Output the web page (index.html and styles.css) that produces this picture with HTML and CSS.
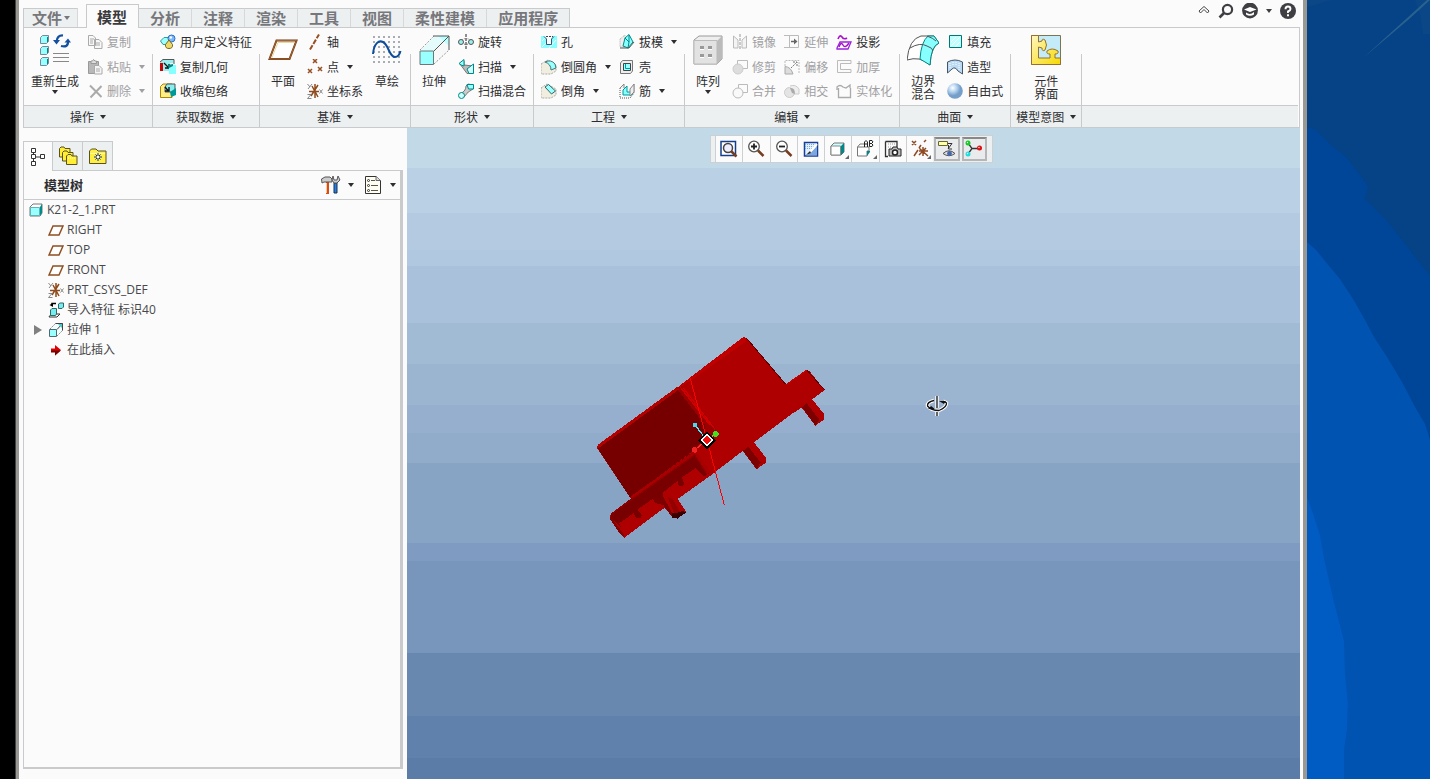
FILE: index.html
```html
<!DOCTYPE html>
<html lang="zh-CN">
<head>
<meta charset="utf-8">
<title>K21-2_1</title>
<link rel="stylesheet" href="styles.css">
</head>
<body>
<svg class="defs" aria-hidden="true">
  <symbol id="plane" viewBox="0 0 16 16"><path d="M1 13L5 4H15L11 13Z" fill="#fff" stroke="#8f4f22" stroke-width="1.500"/></symbol>
  <symbol id="csys" viewBox="0 0 16 16"><path d="M8 1V15M5 3L11 14M11 2L4 13M2 8.500H12" stroke="#8f4a1c" stroke-width="1.500" fill="none"/><path d="M.5 1L3 4M5 1L1 6M12.500 6.500L15.500 10.500M15.500 6.500L12.500 10.500M.5 11.500H4L.5 15.500H4.500" stroke="#888" fill="none"/></symbol>
  <symbol id="box" viewBox="0 0 16 16"><path d="M2 5L5 2H14V11L12 14H2Z" fill="#fff" stroke="#777"/><path d="M12 5L14 2V11L12 14Z" fill="#008c8c"/><path d="M2.500 5.500H11.500V13.500H2.500Z" fill="#9ff" stroke="#5fb5b5"/></symbol>
  <symbol id="extrude" viewBox="0 0 32 32"><path d="M17 2H31L16 17H2Z" fill="#e4fbfb"/><path d="M31 2V16L16 31V17Z" fill="#f8f8f8"/><path d="M20 2H31V12Z" fill="#bff"/><path d="M2 16L16 2M16 30L31 16" stroke="#999" stroke-dasharray="2 1.500" fill="none"/><path d="M15 2H31V16M16 17L31 2" stroke="#555" fill="none"/><path d="M2 17H15.500V30.500H2Z" fill="#9ff" stroke="#6d7777"/></symbol>
  <symbol id="extrude-small" viewBox="0 0 16 16"><path d="M8 1.500H14.500V8L9 14V7H2Z" fill="#f2ffff"/><path d="M2 7L7.500 1.500M9 14L14.500 8.500" stroke="#888" stroke-dasharray="2 1" fill="none"/><path d="M7.500 1.500H14.500V8.500M9 7.500L14.500 1.500" stroke="#444" fill="none"/><path d="M10 2H14V6Z" fill="#4cc"/><path d="M1.500 7.500H8.500V14.500H1.500Z" fill="#9ff" stroke="#567"/></symbol>
</svg>
<div class="screen">
<div class="black-edge"></div>
<main class="window">
<header class="topbar">
  <nav class="tabs">
    <button class="tab file">文件<i class="caret"></i></button>
    <button class="tab active">模型</button><button class="tab">分析</button><button class="tab">注释</button><button class="tab">渲染</button><button class="tab">工具</button><button class="tab">视图</button><button class="tab">柔性建模</button><button class="tab">应用程序</button>
  </nav>
  <div class="utils">
    <button aria-label="最小化功能区"><svg width="12" height="12" viewBox="0 0 12 12"><path d="M1 6L6 1.500L11 6L9.500 8L6 4.500L2.500 8Z" fill="#fff" stroke="#444"/></svg></button>
    <button aria-label="搜索"><svg width="16" height="16" viewBox="0 0 16 16"><circle cx="9.500" cy="6.500" r="4.600" fill="none" stroke="#3f3f43" stroke-width="2.200"/><path d="M6 10L1.500 14.500" stroke="#3f3f43" stroke-width="2.600"/></svg></button>
    <button aria-label="学习"><svg width="16" height="16" viewBox="0 0 16 16"><circle cx="8" cy="7.500" r="7.900" fill="#3f3f43"/><path d="M2 6.500L8 4L14.500 6.500L8 9ZM4 9.500Q8 12.500 12 9V11.500Q8 14 4 11.500Z" fill="#fff"/></svg></button>
    <button aria-label="更多"><i class="caret"></i></button>
    <button aria-label="帮助"><svg width="16" height="16" viewBox="0 0 16 16"><circle cx="8" cy="8" r="8" fill="#3f3f43"/><path d="M5.500 6.200Q5.500 3.500 8 3.500Q10.500 3.500 10.500 6Q10.500 7.500 8 8.500V10" fill="none" stroke="#fff" stroke-width="1.900"/><path d="M7 11.200H9V13.200H7Z" fill="#fff"/></svg></button>
  </div>
</header>

<section class="ribbon">
  <div class="group"><div class="body">
    <button class="big"><svg width="32" height="32" viewBox="0 0 32 32"><g stroke="#789" fill="#9ff"><path d="M1.500 3.500L3.500 1.500H9.500V7.500L7.500 9.500H1.500ZM1.500 14.500L3.500 12.500H9.500V18.500L7.500 20.500H1.500ZM1.500 25.500L3.500 23.500H9.500V29.500L7.500 31.500H1.500Z"/><path d="M8.500 3V8M8.500 14V19M8.500 25V30" stroke="#088"/></g><path d="M24 1.500Q18 1 17.500 8M22 12Q29.500 14 29 7" fill="none" stroke="#1550a0" stroke-width="2.200"/><path d="M14 6H21L17.500 10.500ZM25.500 8.500H32L29 4.500Z" fill="#1550a0"/><path d="M14 19.500H30M14 23.500H30M14 27.500H30" stroke="#888"/></svg><span>重新生成</span><i class="caret"></i></button>
    <div class="col">
      <button class="cmd" disabled><svg viewBox="0 0 16 16"><path d="M1.500 1.500H6L8.500 4V11.500H1.500ZM7.500 5.500H12L15 8.500V14.500H7.500Z" fill="#f8f8f8" stroke="#aaa"/><path d="M3 5H7M3 7H6M3 9H6M9 9H13M9 11H13" stroke="#aaa"/></svg>复制</button>
      <button class="cmd" disabled><svg viewBox="0 0 16 16"><path d="M1.500 2.500H11.500V14.500H1.500Z" fill="#b8b8b8" stroke="#999"/><path d="M4 2H5.500L6.500 .5L8 2H9.500V4.500H4Z" fill="#ddd" stroke="#999"/><path d="M7.500 6.500H12L15 9.500V15H7.500Z" fill="#f5f5f5" stroke="#aaa"/><path d="M9 10H13M9 12H13" stroke="#aaa"/></svg>粘贴<i class="caret"></i></button>
      <button class="cmd" disabled><svg viewBox="0 0 16 16"><path d="M3 2.500L14.500 14M14.500 3L3.500 14.500" stroke="#aaa" stroke-width="2"/></svg>删除<i class="caret"></i></button>
    </div></div><button class="foot">操作<i class="caret"></i></button></div>

  <div class="group"><div class="body"><div class="col">
      <button class="cmd"><svg viewBox="0 0 16 16"><path d="M.5 7L4 3.500H10V10.500H3Z" fill="#9ff" stroke="#399"/><circle cx="11.500" cy="4.500" r="3.500" fill="#7bb8fb" stroke="#2a6fc0"/><circle cx="10.800" cy="3.500" r="1.200" fill="#fff"/><path d="M9 6L12.500 10.500Q13 14.500 9 14.500Q5 14.500 5.500 10.500Z" fill="#ecd968" stroke="#7a6420"/></svg>用户定义特征</button>
      <button class="cmd"><svg viewBox="0 0 16 16"><path d="M0 3L3 0H14V4H10V12H0Z" fill="#9ee"/><path d="M0 3L3 .5H14V5" fill="none" stroke="#555"/><path d="M0 4H3V12H0Z" fill="#c00"/><path d="M4 4L8 8M9 5V9H5" stroke="#111" fill="none" stroke-width="1.300"/><path d="M9 8L11 6H16V15H9Z" fill="#8ff"/><path d="M8 6L13 5V7L9 9V11Z" fill="#088"/></svg>复制几何</button>
      <button class="cmd"><svg viewBox="0 0 16 16"><path d="M.5 3.500L3 1H12V14.500H.5Z" fill="#fe8" stroke="#a80"/><path d="M5 4L7 1H15V9H5Z" fill="#8ee" stroke="#555"/><path d="M5 4L8 7.500M9 4V8H5" stroke="#111" fill="none" stroke-width="1.400"/><path d="M10 9L16 5V12L11 14Z" fill="#099"/></svg>收缩包络</button>
    </div></div><button class="foot">获取数据<i class="caret"></i></button></div>

  <div class="group"><div class="body">
    <button class="big"><svg width="32" height="32" viewBox="0 0 32 32"><path d="M2.500 25L9.500 6.500H29.500L22.500 25Z" fill="#fff" stroke="#6f3b1b" stroke-width="2"/><path d="M5 23.500L11 8.500H27" fill="none" stroke="#e8d9a0"/><path d="M2.500 25L9.500 6.500H29.500L22.500 25Z" fill="none" stroke="#a7652c"/></svg><span>平面</span></button>
    <div class="col">
      <button class="cmd"><svg viewBox="0 0 16 16"><path d="M3 15.500L12 .5" stroke="#9a4f22" stroke-width="2" stroke-dasharray="5 1.500"/></svg>轴</button>
      <button class="cmd"><svg viewBox="0 0 16 16"><path d="M6 0L10 4M10 0L6 4M1 10L5 14M5 10L1 14M11 8L15 12M15 8L11 12" stroke="#9a4f22" stroke-width="1.500"/></svg>点<i class="caret"></i></button>
      <button class="cmd"><svg><use href="#csys"/></svg>坐标系</button>
    </div>
    <button class="big"><svg width="32" height="32" viewBox="0 0 32 32"><g stroke="#a9adb2" stroke-width="2" stroke-dasharray="2 3"><path d="M2 3H31M2 8H31M2 13H31M2 18H31M2 23H31M2 28H31"/></g><path d="M2 20C3 9 8 6 12 8C18 11 18 23 24 23Q28 23 29.500 17" fill="none" stroke="#0d4d9c" stroke-width="2"/></svg><span>草绘</span></button>
    </div><button class="foot">基准<i class="caret"></i></button></div>

  <div class="group"><div class="body">
    <button class="big"><svg width="32" height="32"><use href="#extrude"/></svg><span>拉伸</span></button>
    <div class="col">
      <button class="cmd"><svg viewBox="0 0 16 16"><path d="M8 0V16" stroke="#222" stroke-dasharray="3 1"/><circle cx="3" cy="8" r="2.500" fill="#9ee" stroke="#555"/><circle cx="13" cy="8" r="2.500" fill="#9ee" stroke="#555"/><path d="M4 6Q8 3 12 6" fill="none" stroke="#777" stroke-dasharray="1 1"/><path d="M6 10Q8 11.500 10 10" fill="none" stroke="#777"/></svg>旋转</button>
      <button class="cmd"><svg viewBox="0 0 16 16"><path d="M2 5L6 2V6L15 7V14.500H9Z" fill="#bbb" stroke="#777"/><path d="M1 4.500L6 .5V7L3 6Z" fill="#9ff" stroke="#088"/><path d="M9 10L15.500 5V14.500H11Z" fill="#cff" stroke="#088"/></svg>扫描<i class="caret"></i></button>
      <button class="cmd"><svg viewBox="0 0 16 16"><path d="M1 11Q8 9 8 3L10 1L15 2V6Q10 8 6 14Z" fill="#ccc" stroke="#777"/><path d="M9 1.500H15.500V6H10.500Z" fill="#9ff" stroke="#088"/><circle cx="3.500" cy="12.500" r="3" fill="#cff" stroke="#088"/></svg>扫描混合</button>
    </div></div><button class="foot">形状<i class="caret"></i></button></div>

  <div class="group"><div class="body">
    <div class="col">
      <button class="cmd"><svg viewBox="0 0 16 16"><path d="M0 2H4L6 5V11H10V5L12 2H16V14H0Z" fill="#8ff"/><path d="M1 7L5 3M1 13L6 8M8 14L15 6" stroke="#fff"/><path d="M3 2.500L5.500 5V10.500H10.500V5L13 2.500" fill="none" stroke="#357"/><path d="M5 2.500H12" stroke="#444" stroke-dasharray="2 1"/></svg>孔</button>
      <button class="cmd"><svg viewBox="0 0 16 16"><path d="M0 5L7 1L15 6V12L10 15L0 15Z" fill="#f1eee0" stroke="#aaa" stroke-dasharray="2 1"/><path d="M4 3Q10 0 14 5L15 9L10 11Q10 5 4 3Z" fill="#9ff" stroke="#477"/></svg>倒圆角<i class="caret"></i></button>
      <button class="cmd"><svg viewBox="0 0 16 16"><path d="M0 5L6 1L15 6V12L10 15H0Z" fill="#f1eee0" stroke="#aaa" stroke-dasharray="2 1"/><path d="M4 4L7.500 1.500L14.500 8L10.500 11Z" fill="#9ff" stroke="#366"/></svg>倒角<i class="caret"></i></button>
    </div>
    <div class="col">
      <button class="cmd"><svg viewBox="0 0 16 16"><path d="M1 5L6 1V13H1Z" fill="#eee" stroke="#aaa" stroke-dasharray="1 1"/><path d="M6 4L10 .5L14 8L9 14L4 12Z" fill="#8ff" stroke="#088"/><path d="M6 4L10 8L9 14M10 8L10 1" stroke="#088" fill="none"/><path d="M1 14H10L15 8" fill="none" stroke="#555"/></svg>拔模<i class="caret"></i></button>
      <button class="cmd"><svg viewBox="0 0 16 16"><path d="M1.500 4L3.500 1.500H13.500V12L11.500 14.500H1.500Z" fill="#eee" stroke="#777"/><path d="M4.500 4.500H11.500V11.500H4.500Z" fill="#9ff" stroke="#444"/><path d="M6.500 5V9.500H11" stroke="#099" fill="none"/></svg>壳</button>
      <button class="cmd"><svg viewBox="0 0 16 16"><path d="M1 5V15H11L15 10V1" fill="none" stroke="#555" stroke-dasharray="1 1"/><path d="M5 6L8 3V9H13V12H4V7Z" fill="#8ff" stroke="#099"/><path d="M1 5L5 1V5M11 13L15 9V1L11 6Z" fill="#eee" stroke="#888"/></svg>筋<i class="caret"></i></button>
    </div></div><button class="foot">工程<i class="caret"></i></button></div>

  <div class="group"><div class="body">
    <button class="big"><svg width="32" height="32" viewBox="0 0 32 32"><path d="M2 6L7 2H30V25L25 30H2Z" fill="#eee" stroke="#999"/><path d="M25 7L30 2V25L25 30Z" fill="#bbb"/><path d="M2 6.500H25V30H2Z" fill="#e2e2e2" stroke="#bbb"/><path d="M8 12H12V16H8ZM16 12H20V16H16ZM8 20H12V24H8ZM16 20H20V24H16Z" fill="#999"/><path d="M8 15H12V16H8ZM16 15H20V16H16ZM8 23H12V24H8ZM16 23H20V24H16Z" fill="#fff"/></svg><span>阵列</span><i class="caret"></i></button>
    <div class="col">
      <button class="cmd" disabled><svg viewBox="0 0 16 16"><path d="M1.500 2L6 6V14H1.500ZM14.500 2L10 6V14H14.500Z" fill="#f4f4f4" stroke="#bbb"/><path d="M8 0V16" stroke="#999" stroke-dasharray="3 1"/></svg>镜像</button>
      <button class="cmd" disabled><svg viewBox="0 0 16 16"><path d="M5.500 1.500H15.500V9.500H5.500Z" fill="none" stroke="#bbb"/><circle cx="6" cy="10" r="5" fill="#ddd" stroke="#ccc"/></svg>修剪</button>
      <button class="cmd" disabled><svg viewBox="0 0 16 16"><path d="M6.500 6V1.500H15.500V9.500H11" fill="none" stroke="#bbb"/><circle cx="6" cy="10" r="5" fill="#f9f9f9" stroke="#bbb"/></svg>合并</button>
    </div>
    <div class="col">
      <button class="cmd" disabled><svg viewBox="0 0 16 16"><path d="M0 1.500H14.500V13.500H0M5.500 1V14" fill="none" stroke="#bbb"/><path d="M7 7.500H11" stroke="#666" stroke-width="1.500"/><path d="M10 4.500L13.500 7.500L10 10.500Z" fill="#666"/></svg>延伸</button>
      <button class="cmd" disabled><svg viewBox="0 0 16 16"><path d="M1 7V1.500H15V15" fill="none" stroke="#bbb" stroke-dasharray="2 1"/><path d="M1 7.500Q7 8 9 15H1Z" fill="#ddd" stroke="#aaa"/><path d="M7 9L13 3M9 3H13V7" fill="none" stroke="#777" stroke-dasharray="2 1"/></svg>偏移</button>
      <button class="cmd" disabled><svg viewBox="0 0 16 16"><circle cx="5.500" cy="9.500" r="5" fill="#e4e4e4" stroke="#ccc"/><path d="M6 3Q12 1 15 6V11H9" fill="#eee" stroke="#ccc"/><path d="M6 5Q11 4 11 11L8 10Z" fill="#aaa"/></svg>相交</button>
    </div>
    <div class="col">
      <button class="cmd"><svg viewBox="0 0 16 16"><path d="M2 5Q4 0 6 3T11 4" fill="none" stroke="#a1c" stroke-width="1.600"/><path d="M1 14L4 8H15L12 15H1Z" fill="#fff" stroke="#92d" stroke-width="1.300"/><path d="M3 13Q5 7 7 11T13 9" fill="none" stroke="#a1c" stroke-width="1.500"/></svg>投影</button>
      <button class="cmd" disabled><svg viewBox="0 0 16 16"><path d="M15 1.500H1.500V13.500H15V10.500H4.500V4.500H15Z" fill="#fafafa" stroke="#bbb"/></svg>加厚</button>
      <button class="cmd" disabled><svg viewBox="0 0 16 16"><path d="M1 7V4Q4 1 7 4L10 5L14 2V5M2.500 5V14.500H14.500V5" fill="none" stroke="#aaa" stroke-width="1.300"/></svg>实体化</button>
    </div></div><button class="foot">编辑<i class="caret"></i></button></div>

  <div class="group"><div class="body">
    <button class="big"><svg width="32" height="32" viewBox="0 0 32 32"><path d="M0 26Q2 5 14 2H27L32 9Q24 12 23 31Q17 26 12 25Q6 24 0 26Z" fill="#fff" stroke="#555"/><path d="M13 25Q14 8 21 2H27L32 9Q24 12 23 31Z" fill="#8ff" stroke="#088"/><path d="M3 14Q13 8 20 12Q26 14 26 17M20 2Q26 4 29 7" fill="none" stroke="#555"/></svg><span>边界<br>混合</span></button>
    <div class="col">
      <button class="cmd"><svg viewBox="0 0 16 16"><path d="M2.500 1.500H14.500V13.500H2.500Z" fill="#bff" stroke="#077"/><path d="M4 8L9 3M4 12L13 3M8 13L13 8" stroke="#fff"/></svg>填充</button>
      <button class="cmd"><svg viewBox="0 0 16 16"><path d="M.5 14V3Q8 -1 15.500 3V15L11 12Q8 7 5 10Z" fill="#bcdaf3" stroke="#456"/><path d="M3 4V9M6 3V7M9 3V7M12 4V11" stroke="#fff" stroke-dasharray="1 1"/></svg>造型</button>
      <button class="cmd"><svg viewBox="0 0 16 16"><defs><radialGradient id="ball" cx=".35" cy=".3"><stop stop-color="#fff"/><stop offset=".5" stop-color="#b9d5f0"/><stop offset="1" stop-color="#759fc9"/></radialGradient></defs><circle cx="8" cy="8" r="7.800" fill="url(#ball)"/></svg>自由式</button>
    </div></div><button class="foot">曲面<i class="caret"></i></button></div>

  <div class="group"><div class="body center">
    <button class="big"><svg width="32" height="32" viewBox="0 0 32 32"><defs><linearGradient id="gold" x2="1" y2="1"><stop stop-color="#fff6c0"/><stop offset="1" stop-color="#f6d900"/></linearGradient></defs><path d="M1.500 1.500H30.500V30.500H1.500Z" fill="#c3ebf8" stroke="#7a7652"/><path d="M1.500 1.500H8.500V8L12 7Q12 4 15 6Q18 11 15 16Q12 18 12 14L8.500 13V24H20V20Q16 20 17 17Q22 13 28 17Q29 20 25 20V24H30.500V30.500H1.500Z" fill="url(#gold)" stroke="#96702c"/></svg><span>元件<br>界面</span></button>
    </div><button class="foot">模型意图<i class="caret"></i></button></div>
  <div class="group rest"><div class="body"></div><div class="foot"></div></div>
</section>

<section class="work">
  <aside class="side">
    <div class="side-tabs">
      <button class="on" aria-label="模型树"><svg width="20" height="20" viewBox="-1 0 20 20"><path d="M4.500 5V15M4.500 10H11" stroke="#333"/><path d="M2.500 1.500H6.500V5.500H2.500ZM2.500 7.500H6.500V11.500H2.500ZM2.500 14.500H6.500V18.500H2.500ZM11.500 7.500H15.500V11.500H11.500Z" fill="#fff" stroke="#333"/></svg></button>
      <button aria-label="文件夹浏览器"><svg width="20" height="20" viewBox="0 0 20 20"><g fill="#fe3" stroke="#5b5020"><path d="M1.500 11V2.500L3 1H6L7 2.500H12V11Z"/><path d="M4.500 15V6.500L6 5H9L10 6.500H15V15Z"/><path d="M8.500 18.500V10L10 8.500H13L14 10H19V18.500Z"/></g><path d="M10 12H18" stroke="#fff" stroke-dasharray="1 1"/></svg></button>
      <button aria-label="收藏夹"><svg width="20" height="20" viewBox="0 0 20 20"><path d="M1.500 17.500V5L3.500 3H8L10 5H18V17.500Z" fill="#fe4" stroke="#5b5020"/><path d="M2.500 7.500H17" stroke="#fff8b0"/><path d="M10 7V15M6 11H14M7.500 8.500L12.500 13.500M12.500 8.500L7.500 13.500" stroke="#0a2a9c"/><path d="M9 10H11V12H9Z" fill="#fff"/></svg></button>
    </div>
    <div class="panel">
      <div class="panel-head"><h1>模型树</h1>
        <button aria-label="设置"><svg width="20" height="20" viewBox="0 0 20 20"><path d="M5 7H8V19H5Z" fill="#d84b20"/><path d="M5 8H6V18H5Z" fill="#fc8"/><path d="M.5 4L4 2H9L11 4V7H3L1 8Z" fill="#ccc" stroke="#555"/><path d="M13 8H16V18H13Z" fill="#2a7be0" stroke="#135"/><path d="M12 1L11 5L13 8H16L19 5L17 1L16 5H13Z" fill="#ccc" stroke="#555"/></svg><i class="caret"></i></button>
        <button aria-label="显示"><svg width="20" height="20" viewBox="0 0 20 20"><path d="M2.500 1.500H13L17.500 5.500V18.500H2.500Z" fill="#fffef0" stroke="#333"/><path d="M13 1.500V5.500H17.500" fill="#ddd" stroke="#666"/><path d="M8 5.500H12M8 10.500H15M8 15.500H15" stroke="#555"/><g fill="#fff" stroke="#333"><circle cx="5.500" cy="5.500" r="1"/><circle cx="5.500" cy="10.500" r="1"/><circle cx="5.500" cy="15.500" r="1"/></g></svg><i class="caret"></i></button>
      </div>
      <ul class="tree">
        <li class="root"><svg><use href="#box"/></svg>K21-2_1.PRT</li>
        <li><i class="twist"></i><svg><use href="#plane"/></svg>RIGHT</li>
        <li><i class="twist"></i><svg><use href="#plane"/></svg>TOP</li>
        <li><i class="twist"></i><svg><use href="#plane"/></svg>FRONT</li>
        <li><i class="twist"></i><svg><use href="#csys"/></svg>PRT_CSYS_DEF</li>
        <li><i class="twist"></i><svg viewBox="0 0 16 16"><path d="M1 14.500L4 12H12L9 15H1Z" fill="#fff" stroke="#333"/><path d="M2.500 8L4 6.500H8.500V12L7.500 13.500H2.500ZM10.500 2L12 1H15.500V5L14 6.500H10.500Z" fill="#7ee" stroke="#366"/><path d="M8 1.500H4V4" fill="none" stroke="#000" stroke-width="1.500"/><path d="M1.500 3L5 1V5Z"/></svg>导入特征 标识40</li>
        <li><i class="twist open"></i><svg><use href="#extrude-small"/></svg>拉伸 1</li>
        <li><i class="twist"></i><svg viewBox="0 0 16 16"><path d="M3 6.500H7V3L13 8L7 13.500V10H3Z" fill="#d00"/><path d="M3 8.500H13L7 13.500V10.500H3Z" fill="#700"/></svg>在此插入</li>
      </ul>
    </div>
  </aside>

  <div class="view">
    <div class="view-tools">
      <button aria-label="重新调整"><svg viewBox="0 0 20 20"><path d="M2 2.500H16.500V16.500H2Z" fill="#fff" stroke="#143f8c" stroke-width="1.500"/><circle cx="9" cy="9" r="4.500" fill="#eef" stroke="#444" stroke-width="1.500"/><path d="M12 12L17.500 17.500" stroke="#753e1e" stroke-width="2.500"/></svg></button>
      <button aria-label="放大"><svg viewBox="0 0 20 20"><circle cx="8" cy="7.500" r="5.300" fill="#fff" stroke="#555" stroke-width="1.300"/><path d="M8 4.500V10.500M5 7.500H11" stroke="#222" stroke-width="1.800"/><path d="M12 11.500L17.500 17" stroke="#753e1e" stroke-width="2.500"/></svg></button>
      <button aria-label="缩小"><svg viewBox="0 0 20 20"><circle cx="8" cy="7.500" r="5.300" fill="#fff" stroke="#555" stroke-width="1.300"/><path d="M5 7.500H11" stroke="#222" stroke-width="1.800"/><path d="M12 11.500L17.500 17" stroke="#753e1e" stroke-width="2.500"/></svg></button>
      <button aria-label="重画"><svg viewBox="0 0 20 20"><path d="M3.500 3.500H16.500V17H3.500Z" fill="#e4efff" stroke="#173e98" stroke-width="1.500"/><path d="M4 5.500H15M4 7.500H13M4 9.500H11" stroke="#7ac" stroke-dasharray="1 1"/><path d="M16 7L9 14L5 16.500H16Z" fill="#7da6df"/><path d="M16 5L9 13" stroke="#fff" stroke-width="2"/><path d="M9 12L5 16L10 14Z" fill="#222"/></svg></button>
      <button aria-label="显示样式"><svg viewBox="0 0 20 20"><path d="M3 7L6 4H16V13L13 16H3Z" fill="#cff" stroke="#777"/><path d="M13 7L16 4V13L13 16Z" fill="#088"/><path d="M3 7H12.500V16H3Z" fill="#fff" stroke="#888"/></svg><b></b></button>
      <button aria-label="已命名视图"><svg viewBox="0 0 20 20"><path d="M1.500 8L4 5H8M1.500 8V17H11V12H13V8H1.500" fill="#fff" stroke="#777"/><path d="M11 12H14V13L11 17Z" fill="#088"/><path d="M8.500 8V3L10 1.500L11.500 3V8M8.500 5H11.500M13.500 1.500V7.500H16L17 6L15.500 4.500L17 3L16 1.500ZM13.500 4.500H16" fill="none" stroke="#222"/></svg><b></b></button>
      <button aria-label="视图管理器"><svg viewBox="0 0 20 20"><path d="M2.500 2.500H14V8M2.500 2.500V17.500H5" fill="none" stroke="#333" stroke-width="1.300"/><path d="M5 5H12M5 8H9" stroke="#999" stroke-dasharray="1 1"/><path d="M6 10H9L10 8H14L15 10H18V17H6Z" fill="#bbb" stroke="#222"/><circle cx="12" cy="13.500" r="2.500" fill="#fff" stroke="#222" stroke-width="1.500"/></svg></button>
      <button aria-label="基准显示"><svg viewBox="0 0 20 20"><path d="M2 2L6 6M6 2L2 6M4 17L8 11M9 9L11 6M14 3L16 1M9 9L18 17M16 9L9 16M13 8V17M9 12H18" stroke="#8f4a24" stroke-width="1.500"/></svg><b></b></button>
      <button class="pressed" aria-label="注释显示"><svg viewBox="0 0 20 20"><path d="M1.500 2.500H10.500V6.500H1.500Z" fill="#ffa" stroke="#663"/><path d="M11 4.500H15L11 10M11.500 6V10H15" fill="none" stroke="#333"/><path d="M6 14.500Q12 9 18 14.500Q12 19 6 14.500Z" fill="#ddd" stroke="#555"/><circle cx="12.500" cy="14.500" r="2.400" fill="#46a"/></svg></button>
      <button class="pressed" aria-label="旋转中心"><svg viewBox="0 0 20 20"><path d="M4 4L8 9.500L4 15M8 9.500H15" fill="none" stroke="#333" stroke-width="1.300"/><circle cx="4" cy="4" r="2.500" fill="#1c2"/><circle cx="4" cy="15" r="2.500" fill="#2dd"/><circle cx="15.500" cy="9" r="2.500" fill="#d11"/><g fill="#fff"><circle cx="3.500" cy="3.500" r=".7"/><circle cx="3.500" cy="14.500" r=".7"/><circle cx="15" cy="8.500" r=".7"/></g></svg></button>
    </div>
    <svg class="model" viewBox="0 0 750 660" role="img" aria-label="零件模型" shape-rendering="crispEdges">
      <path d="M21 348L120 277L265 171L460 21L470 25L587 163L650 120L658 123L704 180L667 208L702 252V269L676 287L635 233L605 252L492 337L527 382V398L500 418L458 363L360 438L263 507L288 545L262 566L246 559L224 533L103 623L90 612L61 562L62 551L122 506L21 354Z" fill="#ae0000"/>
      <path d="M23 346L265 170L310 135L460 21L470 25L466 36L310 145L270 172L27 355Z" fill="#c00000"/>
      <path d="M26 354L265 178L345 275V325L305 365L127 499L120 503L22 353Z" fill="#760000"/>
      <path d="M265 170L275 168L378 295V322L345 330V285L262 178Z" fill="#9a0000"/>
      <path d="M269 169L361 286M280 174L375 298" stroke="#d00000" stroke-width="4" fill="none"/>
      <path d="M25 349L265 174" stroke="#b50000" stroke-width="9"/>
      <path d="M122 506L64 552L61 562L92 590L88 580L132 549L136 562L150 565L156 557L143 538L188 507L196 519L208 522L216 516L219 488L265 451L264 466L278 469L284 462L275 443L317 415L342 440L357 430L315 376L300 370Z" fill="#790000"/>
      <path d="M125 504L315 369L356 430" stroke="#a80000" stroke-width="11" fill="none"/>
      <path d="M64 552L314 375L350 432" stroke="#8c0000" stroke-width="4" fill="none"/>
      <path d="M61 559L103 614V623L90 612L61 568Z" fill="#860000"/>
      <path d="M219 498L247 550L246 561L220 525L196 519L193 510ZM637 232L650 220L688 268L676 287ZM459 362L475 350L512 397L500 418Z" fill="#7c0000"/>
      <path d="M246 550L280 543L288 548L262 566L247 563Z" fill="#3a0000"/>
      <path d="M233 500L250 509L270 546L252 550Z" fill="#920000"/>
      <path d="M470 25L587 163M650 120L704 180" stroke="#650000" stroke-width="3"/>
      <path d="M589 164L650 121" stroke="#c20000" stroke-width="4"/>
      <path d="M300 143L351 330L403 525" fill="none" stroke="#ff0000" stroke-width="3"/>
      <path d="M315 285L351 331" stroke="#49efff" stroke-width="4"/><path d="M313 360L351 331" stroke="#e33" stroke-width="4"/><path d="M377 312L351 331" stroke="#6d3" stroke-width="4"/>
      <circle cx="315" cy="285" r="7" fill="#43dbed"/><circle cx="377" cy="312" r="9" fill="#43df20"/><circle cx="314" cy="360" r="8" fill="#f02222"/>
      <path d="M351 308L374 331L351 354L328 331Z" fill="#fff" stroke="#000" stroke-width="5"/><path d="M351 318L364 331L351 344L338 331Z" fill="#f00d0d"/>
    </svg>
    <svg class="spin" viewBox="0 0 24 24" aria-hidden="true"><path d="M12 2V14M9 6.500Q2 8 2.500 12Q6 16.500 14 16.500Q22 13 21.500 9L18 7M12 18V22" fill="none" stroke="#fff" stroke-width="3.500"/><path d="M12 2V14M9 6.500Q2 8 2.500 12Q6 16.500 14 16.500Q22 13 21.500 9L18 7M12 18V22" fill="none" stroke="#111" stroke-width="1.300"/><path d="M14 7H21L19 10ZM3 15H10L6 12Z" fill="#111"/></svg>
  </div>
</section>
</main>
<svg class="desktop" viewBox="0 0 123 779" preserveAspectRatio="none" aria-hidden="true">
  <path d="M0 0H123V779H0Z" fill="#054286"/>
  <path d="M0 0H25L8 5L0 7ZM123 0H108L113 14L116 34H123Z" fill="#0b4786"/>
  <path d="M56 58L120 0H123L101 20Z" fill="#2a628f"/>
  <path d="M0 127L9 130L24 145L40 158L61 186L58 199L80 221L99 245L123 276V779H0Z" fill="#004698"/>
  <path d="M0 242L10 251L22 266L33 279L46 299L58 320L67 337L80 357L95 382L108 407L118 424L123 440V779H0Z" fill="#0053b0"/>
  <path d="M0 497L6 513L13 535L17 558L22 580L27 602L33 625L37 641L38 673L41 704L40 730L37 750V779H0Z" fill="#005bc2"/>
</svg>
</div>
</body>
</html>
```
FILE: styles.css
```css
* { box-sizing: border-box; }
html, body { height: 100%; margin: 0; }
body {
  overflow: hidden;
  color: #2e2e30;
  font: 12px/16px "Noto Sans CJK SC", sans-serif;
}
button {
  margin: 0; padding: 0; border: 0; background: none;
  color: inherit; font: inherit; white-space: nowrap;
}
svg { display: block; flex: none; }
.defs { position: absolute; width: 0; height: 0; }

.caret {
  flex: none;
  width: 0; height: 0;
  border: solid transparent;
  border-width: 4px 3px 0;
  border-top-color: currentColor;
}

.screen { display: flex; height: 100vh; min-height: 300px; }
.black-edge { width: 16px; background: #000; border-right: 1px solid #444; }
.window {
  flex: 1; min-width: 0;
  display: flex; flex-direction: column;
  padding: 0 3px 0 4px;
  border: solid #999893;
  border-width: 0 4px 0 3px;
  background: #fbfbfb;
}
.desktop { width: 123px; height: 100%; }

/* Top bar */
.topbar { display: flex; justify-content: space-between; height: 27px; }
.tabs { display: flex; align-items: flex-end; position: relative; z-index: 1; }
.tab {
  height: 19px; padding: 0 11px;
  border-top: 1px solid #c8cacb;
  border-right: 1px solid #d6d8d9;
  background: #ecf0f1;
  color: #77777b; font-size: 15px; font-weight: 700; line-height: 16px;
}
.tab:last-child { border-right-color: #c8cacb; }
.tab.file {
  display: flex; align-items: center; gap: 2px;
  margin-right: 8px; padding: 0 7px 0 8px;
  border-left: 1px solid #c8cacb;
}
.tab.active {
  height: 24px; margin-bottom: -1px;
  border-left: 1px solid #c8cacb; border-right-color: #c8cacb;
  padding: 0 11px 0 10px;
  background: #fbfbfb; color: #3b3b3e; line-height: 22px;
}
.utils { display: flex; align-items: flex-start; gap: 8px; padding: 3px 4px 0 0; color: #3f3f43; }
.utils button { display: flex; align-items: center; height: 16px; }

/* Ribbon */
.ribbon { display: flex; height: 101px; border: 1px solid #c8cacb; }
.group {
  display: flex; flex-direction: column; flex: none;
  padding-right: 1px;
  background: linear-gradient(#c8cacb, #c8cacb) right bottom / 1px 73px no-repeat;
}
.group.rest { flex: 1; background: none; }
.body { display: flex; gap: 8px; height: 77px; padding: 0 7px; }
.body.center { justify-content: center; }
.col { display: grid; grid-template-rows: 24px 25px 24px; padding-top: 2px; }
.cmd { display: flex; align-items: center; gap: 4px; }
.cmd svg { width: 16px; height: 16px; }
.cmd .caret { margin-left: 4px; }
.cmd:disabled { color: #a0a0a2; }
.big {
  display: flex; flex-direction: column; align-items: center;
  padding-top: 6px; line-height: 13px;
}
.big span { margin: 8px 0 3px; }
.foot {
  display: flex; align-items: center; justify-content: center; gap: 6px;
  flex: 1; padding: 0 5px;
  border-top: 1px solid #c8cacb;
  background: #ecf0f1;
}

/* Work area */
.work { flex: 1; display: flex; min-height: 0; }
.side { display: flex; flex-direction: column; width: 380px; margin-right: 4px; padding: 13px 0 10px; }
.side-tabs { display: flex; position: relative; z-index: 1; height: 29px; }
.side-tabs button {
  display: flex; align-items: center; justify-content: center;
  width: 30px;
  border: 1px solid #c8cacb; border-width: 1px 1px 0 0;
  background: #ecf0f1;
}
.side-tabs .on { height: 30px; border-left-width: 1px; background: #fbfbfb; }
.panel { flex: 1; border: 1px solid #c8cacb; border-width: 1px 3px 2px 1px; }
.panel-head {
  display: flex; align-items: center; gap: 9px;
  height: 29px; padding: 0 4px 0 20px;
  border-bottom: 1px solid #c8cacb;
}
.panel-head h1 { flex: 1; margin: 0; font-size: 13px; font-weight: 700; }
.panel-head button { display: flex; align-items: center; gap: 7px; }
.tree {
  margin: 0; padding: 0; list-style: none;
  color: #48484c; font-family: "Open Sans", "Noto Sans CJK SC", sans-serif;
}
.tree li { display: flex; align-items: center; height: 20px; padding-left: 10px; white-space: pre; }
.tree .root { padding-left: 4px; }
.tree svg { width: 16px; height: 16px; margin-right: 3px; }
.twist { width: 8px; height: 10px; margin-right: 6px; }
.twist.open { border: solid transparent; border-width: 5px 0 5px 8px; border-left-color: #808080; }

.view {
  flex: 1; position: relative; overflow: hidden;
  display: flex; justify-content: center; align-items: flex-start;
  padding: 7px 4px 0 0;
  background: linear-gradient(
    #c2d9e8 40px, #bad0e4 40px 85px, #b4cae1 85px 122px, #b0c8e0 122px 138px,
    #a9c1da 138px 195px, #a2bbd5 195px 236px, #9bb4d0 236px 277px,
    #96afce 277px 305px, #91abcb 305px 335px, #88a4c5 335px 415px,
    #809bc1 415px 433px, #7895bb 433px 525px, #6988b0 525px 588px,
    #6181ad 588px 630px, #5c7ca8 630px);
}
.view-tools {
  display: grid; grid-template-columns: repeat(10, 1fr);
  width: 283px; height: 28px;
  padding: 0 4px;
  border: 1px solid #ccd0d2;
  background: #ecf0f1;
}
.view-tools button {
  position: relative;
  display: flex; align-items: center; justify-content: center;
  border-left: 1px solid #ccd0d2;
  background: #fbfbfb;
}
.view-tools svg { width: 20px; height: 20px; }
.view-tools .pressed { margin: 1px; border: 2px solid #b4b6b8; border-top-color: #888; background: #e9ebec; }
.view-tools b {
  position: absolute; right: 2px; bottom: 3px;
  border: solid transparent; border-width: 0 0 4px 4px;
  border-bottom-color: #666;
}
.model { position: absolute; left: 183px; top: 202px; width: 250px; height: 220px; }
.spin { position: absolute; left: 518px; top: 266px; width: 24px; height: 24px; }
```
